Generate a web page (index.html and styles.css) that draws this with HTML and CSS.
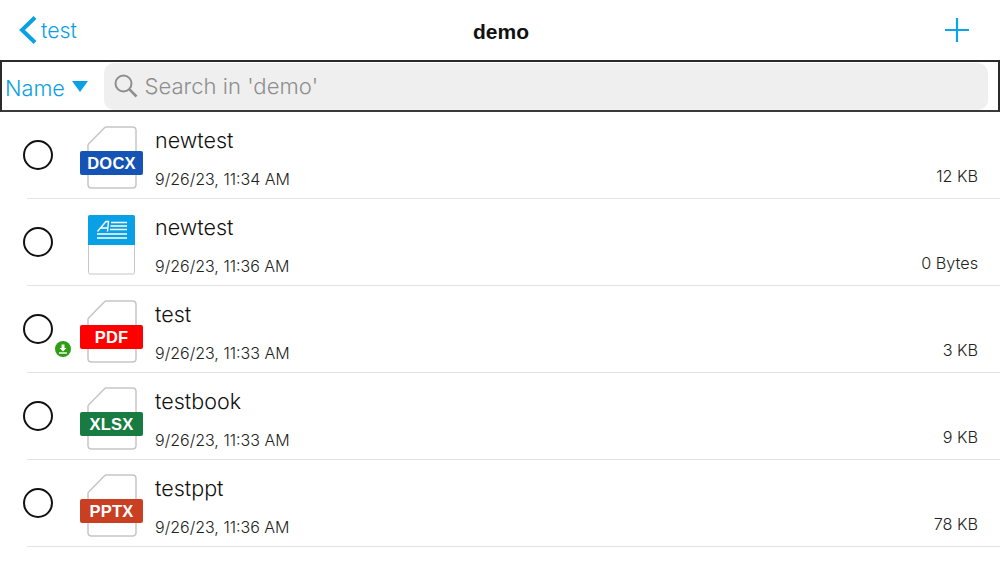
FILE: index.html
```html
<!DOCTYPE html>
<html lang="en">
<head>
<meta charset="utf-8">
<title>demo</title>
<link rel="stylesheet" href="styles.css">
</head>
<body>
<svg class="defs" width="0" height="0" aria-hidden="true">
  <symbol id="sheet" viewBox="0 0 50 63">
    <path d="M19 1H45.500Q49 1 49 4.500V58.500Q49 62 45.500 62H4.500Q1 62 1 58.500V19.500Q1 18.500 1.800 17.700L17.500 1.700Q18.200 1 19 1Z" fill="#fff" stroke="#c6c6c6" stroke-width="1.500"/>
  </symbol>
</svg>
<main class="app">
  <header class="nav">
    <div class="nav-left">
      <svg class="chevron" viewBox="0 0 18 28"><path d="M16 1.500 3 14 16 26.500" fill="none" stroke="#0aa0e6" stroke-width="4"/></svg>
      <span class="back">test</span>
    </div>
    <h1 class="title">demo</h1>
    <svg class="plus" viewBox="0 0 24 24"><path d="M12 0V24M0 12H24" stroke="#0aa5ee" stroke-width="2.200"/></svg>
  </header>
  <div class="toolbar">
    <div class="sort"><span>Name</span><i class="caret"></i></div>
    <div class="search">
      <svg class="lens" viewBox="0 0 24 24"><circle cx="9.500" cy="9.500" r="8" fill="none" stroke="#8e8e8e" stroke-width="2"/><path d="M15.200 15.200 22.500 22.500" stroke="#8e8e8e" stroke-width="2.600"/></svg>
      <span>Search in 'demo'</span>
    </div>
  </div>
  <ul class="list">
    <li class="row">
      <div class="radio"></div>
      <div class="icon"><svg class="sheet"><use href="#sheet"/></svg><b class="band docx">DOCX</b></div>
      <div class="info"><div class="name">newtest</div><div class="date">9/26/23, 11:34 AM</div></div>
      <div class="size">12 KB</div>
    </li>
    <li class="sep"></li>
    <li class="row">
      <div class="radio"></div>
      <div class="icon">
        <svg class="note" viewBox="0 0 47 62">
          <rect x=".5" y=".5" width="46" height="58.500" rx="1.500" fill="#fff" stroke="#c6c6c6"/>
          <path d="M0 2Q0 0 2 0H45Q47 0 47 2V30H0Z" fill="#0aa0e6"/>
          <path d="M23 7.500H39M22.500 11H39M22 14.500H39M9 19H39M9 23H39" stroke="#fff" stroke-width="1.300"/>
          <path d="M9.500 16.500 18 6.500H20.500L19.500 16.500M13 13H20" fill="none" stroke="#fff" stroke-width="1.400"/>
        </svg>
      </div>
      <div class="info"><div class="name">newtest</div><div class="date">9/26/23, 11:36 AM</div></div>
      <div class="size">0 Bytes</div>
    </li>
    <li class="sep"></li>
    <li class="row">
      <div class="radio"></div>
      <svg class="badge" viewBox="0 0 16 16"><circle cx="8" cy="8" r="8" fill="#2f9e14"/><path d="M6.500 3.500H9.500V7H11.500L8 10.500 4.500 7H6.500Z" fill="#fff"/><path d="M4 12H12" stroke="#fff" stroke-width="1.400"/></svg>
      <div class="icon"><svg class="sheet"><use href="#sheet"/></svg><b class="band pdf">PDF</b></div>
      <div class="info"><div class="name">test</div><div class="date">9/26/23, 11:33 AM</div></div>
      <div class="size">3 KB</div>
    </li>
    <li class="sep"></li>
    <li class="row">
      <div class="radio"></div>
      <div class="icon"><svg class="sheet"><use href="#sheet"/></svg><b class="band xlsx">XLSX</b></div>
      <div class="info"><div class="name">testbook</div><div class="date">9/26/23, 11:33 AM</div></div>
      <div class="size">9 KB</div>
    </li>
    <li class="sep"></li>
    <li class="row">
      <div class="radio"></div>
      <div class="icon"><svg class="sheet"><use href="#sheet"/></svg><b class="band pptx">PPTX</b></div>
      <div class="info"><div class="name">testppt</div><div class="date">9/26/23, 11:36 AM</div></div>
      <div class="size">78 KB</div>
    </li>
    <li class="sep"></li>
  </ul>
</main>
</body>
</html>
```

FILE: styles.css
```css
* { box-sizing: border-box; }
html, body { margin: 0; height: 100%; background: #fff; }
body { font-family: Inter, "Liberation Sans", Arial, sans-serif; font-weight: 300; color: #1c1c1c; overflow: hidden; }
.defs { position: absolute; }
.app { width: 1000px; height: 563px; display: flex; flex-direction: column; }

.nav { height: 60px; flex: none; display: flex; align-items: center; justify-content: space-between; padding: 0 31px 0 19px; position: relative; }
.nav-left { display: flex; align-items: center; gap: 4px; color: #0aa0e6; font-size: 21.300px; }
.chevron { width: 18px; height: 28px; display: block; }
.back { position: relative; }
.title { position: absolute; left: 0; right: 0; margin: 0; padding-left: 2px; text-align: center; font-family: "Liberation Sans", Arial, sans-serif; font-size: 21px; font-weight: 700; color: #111; top: 20px; line-height: 24px; }
.plus { width: 24px; height: 24px; display: block; }

.toolbar { height: 52px; flex: none; border: 2px solid #2b2b2b; border-bottom-color: #3a3a3a; display: flex; align-items: center; padding: 0 10px 0 3px; }
.sort { width: 98.500px; display: flex; align-items: center; color: #0aa0e6; font-size: 21.700px; padding-top: 4px; gap: 7px; }
.caret { width: 0; height: 0; border-left: 8px solid transparent; border-right: 8px solid transparent; border-top: 11px solid #0aa0e6; margin-top: -4px; }
.search { flex: 1; height: 47px; background: #efefef; border-radius: 10px; display: flex; align-items: center; padding-left: 10px; gap: 7px; color: #8e8e8e; font-size: 22.100px; }
.lens { width: 24px; height: 24px; display: block; }

.list { list-style: none; margin: 0; padding: 0; }
.row { height: 86px; display: flex; position: relative; }
.sep { height: 1px; margin-left: 27px; background: #e3e3e3; }
.radio { width: 30px; height: 30px; margin: 28px 0 0 23px; border: 2.300px solid #111; border-radius: 50%; flex: none; }
.badge { position: absolute; left: 55px; top: 55px; width: 16px; height: 16px; }
.icon { width: 63px; height: 63px; margin: 14px 0 0 27px; flex: none; position: relative; }
.sheet { position: absolute; left: 7px; top: 0; width: 50px; height: 63px; }
.note { position: absolute; left: 8px; top: 2px; width: 47px; height: 62px; }
.band { position: absolute; left: 0; top: 25px; width: 63px; height: 24px; border-radius: 2px; color: #fff; font-family: "Liberation Sans", Arial, sans-serif; font-size: 16.500px; font-weight: 700; line-height: 24px; text-align: center; letter-spacing: .2px; }
.docx { background: #1553b4; }
.pdf { background: #fe0000; }
.xlsx { background: #187b41; }
.pptx { background: #c93f22; }
.info { margin-left: 12px; flex: 1; }
.name { font-size: 21.500px; line-height: 26px; margin-top: 15px; color: #111; }
.date { font-size: 16px; line-height: 20px; margin-top: 16px; color: #222; }
.size { align-self: flex-start; margin: 54px 22px 0 0; font-size: 16.200px; line-height: 20px; color: #222; }
```
